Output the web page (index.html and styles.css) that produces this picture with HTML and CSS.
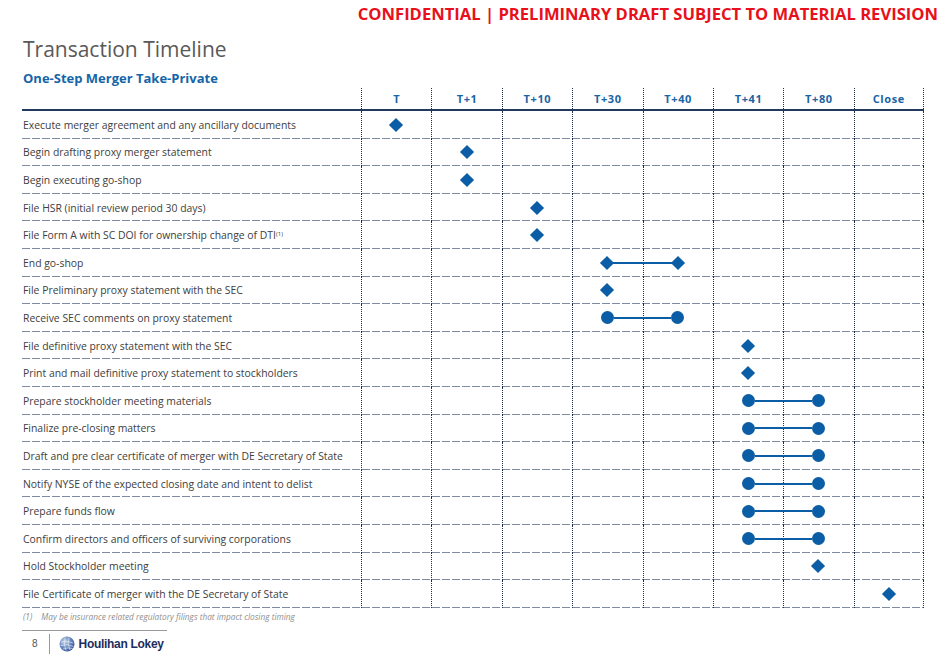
FILE: index.html
```html
<!DOCTYPE html>
<html>
<head>
<meta charset="utf-8">
<link rel="stylesheet" href="styles.css">
</head>
<body>
<div class="page">
  <div class="confidential">CONFIDENTIAL | PRELIMINARY DRAFT SUBJECT TO MATERIAL REVISION</div>
  <h1 class="title">Transaction Timeline</h1>
  <h2 class="subtitle">One-Step Merger Take-Private</h2>

  <div class="table">
    <div class="row head">
      <div class="label"></div>
      <div class="cell">T</div><div class="cell">T+1</div><div class="cell">T+10</div><div class="cell">T+30</div>
      <div class="cell">T+40</div><div class="cell">T+41</div><div class="cell">T+80</div><div class="cell last">Close</div>
    </div>

    <div class="row"><div class="label">Execute merger agreement and any ancillary documents</div><div class="cell"></div><div class="cell"></div><div class="cell"></div><div class="cell"></div><div class="cell"></div><div class="cell"></div><div class="cell"></div><div class="cell last"></div>
      <div class="mk col2"><span class="dia"></span></div></div>
    <div class="row"><div class="label">Begin drafting proxy merger statement</div><div class="cell"></div><div class="cell"></div><div class="cell"></div><div class="cell"></div><div class="cell"></div><div class="cell"></div><div class="cell"></div><div class="cell last"></div>
      <div class="mk col3"><span class="dia"></span></div></div>
    <div class="row"><div class="label">Begin executing go-shop</div><div class="cell"></div><div class="cell"></div><div class="cell"></div><div class="cell"></div><div class="cell"></div><div class="cell"></div><div class="cell"></div><div class="cell last"></div>
      <div class="mk col3"><span class="dia"></span></div></div>
    <div class="row"><div class="label">File HSR (initial review period 30 days)</div><div class="cell"></div><div class="cell"></div><div class="cell"></div><div class="cell"></div><div class="cell"></div><div class="cell"></div><div class="cell"></div><div class="cell last"></div>
      <div class="mk col4"><span class="dia"></span></div></div>
    <div class="row"><div class="label">File Form A with SC DOI for ownership change of DTI<sup>(1)</sup></div><div class="cell"></div><div class="cell"></div><div class="cell"></div><div class="cell"></div><div class="cell"></div><div class="cell"></div><div class="cell"></div><div class="cell last"></div>
      <div class="mk col4"><span class="dia"></span></div></div>
    <div class="row"><div class="label">End go-shop</div><div class="cell"></div><div class="cell"></div><div class="cell"></div><div class="cell"></div><div class="cell"></div><div class="cell"></div><div class="cell"></div><div class="cell last"></div>
      <div class="mk span span5-7 dspan"><span class="dia"></span><span class="bar"></span><span class="dia"></span></div></div>
    <div class="row"><div class="label">File Preliminary proxy statement with the SEC</div><div class="cell"></div><div class="cell"></div><div class="cell"></div><div class="cell"></div><div class="cell"></div><div class="cell"></div><div class="cell"></div><div class="cell last"></div>
      <div class="mk col5"><span class="dia"></span></div></div>
    <div class="row"><div class="label">Receive SEC comments on proxy statement</div><div class="cell"></div><div class="cell"></div><div class="cell"></div><div class="cell"></div><div class="cell"></div><div class="cell"></div><div class="cell"></div><div class="cell last"></div>
      <div class="mk span span5-7 cspan"><span class="dot"></span><span class="bar"></span><span class="dot"></span></div></div>
    <div class="row"><div class="label">File definitive proxy statement with the SEC</div><div class="cell"></div><div class="cell"></div><div class="cell"></div><div class="cell"></div><div class="cell"></div><div class="cell"></div><div class="cell"></div><div class="cell last"></div>
      <div class="mk col7"><span class="dia"></span></div></div>
    <div class="row"><div class="label">Print and mail definitive proxy statement to stockholders</div><div class="cell"></div><div class="cell"></div><div class="cell"></div><div class="cell"></div><div class="cell"></div><div class="cell"></div><div class="cell"></div><div class="cell last"></div>
      <div class="mk col7"><span class="dia"></span></div></div>
    <div class="row"><div class="label">Prepare stockholder meeting materials</div><div class="cell"></div><div class="cell"></div><div class="cell"></div><div class="cell"></div><div class="cell"></div><div class="cell"></div><div class="cell"></div><div class="cell last"></div>
      <div class="mk span span7-9 cspan"><span class="dot"></span><span class="bar"></span><span class="dot"></span></div></div>
    <div class="row"><div class="label">Finalize pre-closing matters</div><div class="cell"></div><div class="cell"></div><div class="cell"></div><div class="cell"></div><div class="cell"></div><div class="cell"></div><div class="cell"></div><div class="cell last"></div>
      <div class="mk span span7-9 cspan"><span class="dot"></span><span class="bar"></span><span class="dot"></span></div></div>
    <div class="row"><div class="label">Draft and pre clear certificate of merger with DE Secretary of State</div><div class="cell"></div><div class="cell"></div><div class="cell"></div><div class="cell"></div><div class="cell"></div><div class="cell"></div><div class="cell"></div><div class="cell last"></div>
      <div class="mk span span7-9 cspan"><span class="dot"></span><span class="bar"></span><span class="dot"></span></div></div>
    <div class="row"><div class="label">Notify NYSE of the expected closing date and intent to delist</div><div class="cell"></div><div class="cell"></div><div class="cell"></div><div class="cell"></div><div class="cell"></div><div class="cell"></div><div class="cell"></div><div class="cell last"></div>
      <div class="mk span span7-9 cspan"><span class="dot"></span><span class="bar"></span><span class="dot"></span></div></div>
    <div class="row"><div class="label">Prepare funds flow</div><div class="cell"></div><div class="cell"></div><div class="cell"></div><div class="cell"></div><div class="cell"></div><div class="cell"></div><div class="cell"></div><div class="cell last"></div>
      <div class="mk span span7-9 cspan"><span class="dot"></span><span class="bar"></span><span class="dot"></span></div></div>
    <div class="row"><div class="label">Confirm directors and officers of surviving corporations</div><div class="cell"></div><div class="cell"></div><div class="cell"></div><div class="cell"></div><div class="cell"></div><div class="cell"></div><div class="cell"></div><div class="cell last"></div>
      <div class="mk span span7-9 cspan"><span class="dot"></span><span class="bar"></span><span class="dot"></span></div></div>
    <div class="row"><div class="label">Hold Stockholder meeting</div><div class="cell"></div><div class="cell"></div><div class="cell"></div><div class="cell"></div><div class="cell"></div><div class="cell"></div><div class="cell"></div><div class="cell last"></div>
      <div class="mk col8"><span class="dia"></span></div></div>
    <div class="row"><div class="label">File Certificate of merger with the DE Secretary of State</div><div class="cell"></div><div class="cell"></div><div class="cell"></div><div class="cell"></div><div class="cell"></div><div class="cell"></div><div class="cell"></div><div class="cell last"></div>
      <div class="mk col9"><span class="dia"></span></div></div>
  </div>

  <div class="footnote"><span class="fn-num">(1)</span>May be insurance related regulatory filings that impact closing timing</div>

  <div class="footer">
    <div class="footer-rule"></div>
    <div class="footer-row">
      <span class="pagenum">8</span>
      <span class="sep"></span>
      <svg class="globe" width="16" height="16" viewBox="0 0 16 16">
        <defs>
          <radialGradient id="g" cx="0.35" cy="0.35" r="0.75">
            <stop offset="0" stop-color="#c9d6ea"/>
            <stop offset="0.5" stop-color="#6f8fc4"/>
            <stop offset="1" stop-color="#2d4f93"/>
          </radialGradient>
        </defs>
        <circle cx="8" cy="8" r="7.5" fill="url(#g)"/>
        <path d="M2 6 Q8 4 14 7 M1.5 9.5 Q8 7.5 14.5 10.5 M4 13 Q9 11 13.5 12.5 M6 1.5 Q4 8 7 14.5 M10 1.2 Q8 8 11 14" stroke="#e6ecf6" stroke-width="0.8" fill="none" opacity="0.8"/>
      </svg>
      <span class="brand">Houlihan Lokey</span>
    </div>
  </div>
</div>
</body>
</html>
```

FILE: styles.css
```css
* { box-sizing: border-box; }
html, body { margin: 0; padding: 0; background: #fff; }
body { width: 950px; height: 658px; overflow: hidden; font-family: "Open Sans", "Noto Sans", sans-serif; }

.page { padding: 0 12px 0 22px; }

.confidential {
  text-align: right;
  color: #e8101a;
  font-weight: 700;
  font-size: 16.6px;
  line-height: 20px;
  padding-top: 4px;
}

.title {
  margin: 11px 0 0 1px;
  font-size: 21px;
  font-weight: 400;
  color: #595959;
  line-height: 28px;
}

.subtitle {
  margin: 6px 0 0 1px;
  font-size: 13px;
  font-weight: 700;
  color: #1565a8;
  line-height: 18px;
}

.table { width: 902px; margin-top: 1px; }

.row {
  display: grid;
  grid-template-columns: 339px repeat(8, 1fr);
  height: 27.6px;
  background-image: repeating-linear-gradient(90deg, #7f8ba0 0 8px, transparent 8px 10px);
  background-size: 100% 1px;
  background-position: left bottom;
  background-repeat: no-repeat;
}
.row > * { grid-row: 1; }
.row > :nth-child(1) { grid-column: 1; }
.row > :nth-child(2) { grid-column: 2; }
.row > :nth-child(3) { grid-column: 3; }
.row > :nth-child(4) { grid-column: 4; }
.row > :nth-child(5) { grid-column: 5; }
.row > :nth-child(6) { grid-column: 6; }
.row > :nth-child(7) { grid-column: 7; }
.row > :nth-child(8) { grid-column: 8; }
.row > :nth-child(9) { grid-column: 9; }

.row.head {
  height: 23px;
  background: none;
  border-bottom: 2px solid #23395e;
}
.head .cell {
  display: flex;
  align-items: center;
  justify-content: center;
  color: #1b64a4;
  font-weight: 700;
  font-size: 11px;
  letter-spacing: 0.6px;
}

.label {
  display: flex;
  align-items: center;
  padding-left: 1px;
  font-size: 10.4px;
  color: #404040;
  white-space: nowrap;
}
.label sup { font-size: 6px; line-height: 0; position: relative; top: -1px; vertical-align: super; }

.cell { border-left: 1px dotted #1c2b4a; }
.cell.last { border-right: 1px dotted #1c2b4a; }

.mk {
  display: flex;
  align-items: center;
  justify-content: center;
  z-index: 1;
}
.col2 { grid-column: 2; }
.col3 { grid-column: 3; }
.col4 { grid-column: 4; }
.col5 { grid-column: 5; }
.col7 { grid-column: 7; }
.col8 { grid-column: 8; }
.col9 { grid-column: 9; }
.span5-7 { grid-column: 5 / 7; }
.span7-9 { grid-column: 7 / 9; }

.span { justify-content: space-between; }
.dspan { padding: 0 30px 0 30px; }
.cspan { padding: 0 28.7px 0 28.7px; }

.dia {
  width: 10px;
  height: 10px;
  background: #0b5ea5;
  transform: rotate(45deg);
  flex: none;
}
.dot {
  width: 13px;
  height: 13px;
  border-radius: 50%;
  background: #0b5ea5;
  flex: none;
}
.bar {
  flex: 1;
  height: 2px;
  background: #0b5ea5;
}

.footnote {
  margin-top: 3px;
  padding-left: 1px;
  font-size: 8.3px;
  font-style: italic;
  color: #8f8f8f;
  line-height: 12px;
}
.fn-num { margin-right: 9px; }

.footer { margin-top: 7px; }
.footer-rule { width: 145px; height: 1px; background: #9a9a9a; }
.footer-row {
  display: flex;
  align-items: center;
  height: 22px;
  margin-top: 2px;
}
.pagenum {
  font-family: "Liberation Sans", Arial, sans-serif;
  font-size: 10px;
  color: #555;
  margin-left: 10px;
}
.sep { width: 1px; height: 20px; background: #9a9a9a; margin-left: 11px; }
.globe { margin-left: 9px; }
.brand {
  margin-left: 4px;
  font-family: "Liberation Sans", Arial, sans-serif;
  font-weight: 700;
  font-size: 12px;
  letter-spacing: -0.3px;
  color: #1c2d5e;
}
```
